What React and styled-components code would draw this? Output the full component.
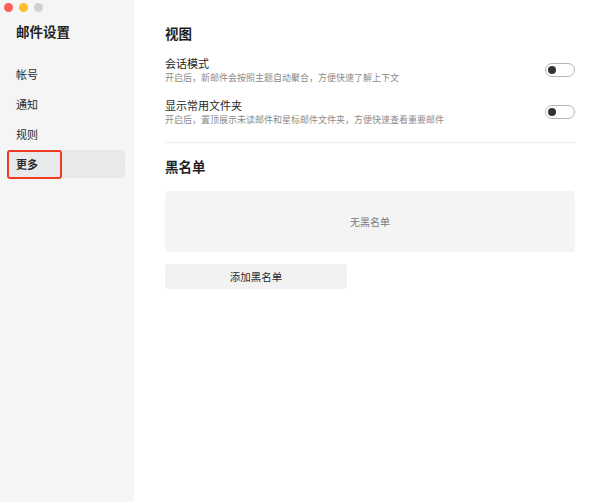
import React from "react";
import styled, { createGlobalStyle } from "styled-components";

const Global = createGlobalStyle`
  html, body { margin: 0; padding: 0; background: #ffffff; }
  body { font-family: "Noto Sans CJK SC", "Noto Sans", sans-serif; }
  * { box-sizing: border-box; }
`;

const Window = styled.div`
  width: 604px;
  height: 502px;
  display: flex;
  background: #ffffff;
  overflow: hidden;
`;

const Sidebar = styled.div`
  width: 134px;
  flex-shrink: 0;
  background: #f5f5f5;
  display: flex;
  flex-direction: column;
  padding: 2px 9px 0 8px;
`;

const Lights = styled.div`
  display: flex;
  gap: 6px;
  margin-left: -4px;
  height: 10px;
  align-items: center;
`;

const Light = styled.span`
  width: 9px;
  height: 9px;
  border-radius: 50%;
  background: ${(p) => p.$c};
`;

const SideTitle = styled.div`
  font-size: 13.5px;
  font-weight: 700;
  color: #1f1f1f;
  padding-left: 8px;
  margin-top: 9px;
  line-height: 20px;
`;

const Nav = styled.div`
  display: flex;
  flex-direction: column;
  gap: 2px;
  margin-top: 19px;
`;

const NavItem = styled.div`
  position: relative;
  height: 28px;
  display: flex;
  align-items: center;
  padding-left: 8px;
  font-size: 11px;
  color: #2a2a2a;
  border-radius: 4px;
  background: ${(p) => (p.$active ? "#e8e9eb" : "transparent")};
  font-weight: ${(p) => (p.$active ? 700 : 400)};
`;

const Highlight = styled.span`
  position: absolute;
  left: -1px;
  top: 0;
  width: 55px;
  height: 29px;
  border: 2px solid #f03b20;
  border-radius: 3px;
`;

const Main = styled.div`
  flex: 1;
  padding: 23px 29px 0 31px;
  display: flex;
  flex-direction: column;
`;

const Heading = styled.div`
  font-size: 13.5px;
  font-weight: 700;
  color: #1f1f1f;
  line-height: 20px;
`;

const Rows = styled.div`
  display: flex;
  flex-direction: column;
  gap: 14px;
  margin-top: 13px;
`;

const Row = styled.div`
  display: flex;
  align-items: center;
  justify-content: space-between;
`;

const RowText = styled.div`
  display: flex;
  flex-direction: column;
`;

const RowTitle = styled.div`
  font-size: 11px;
  color: #1f1f1f;
  line-height: 15px;
`;

const RowDesc = styled.div`
  font-size: 9px;
  color: #8a8a8a;
  line-height: 13px;
`;

const Toggle = styled.div`
  width: 30px;
  height: 14px;
  border: 1px solid #b5b5b5;
  border-radius: 8px;
  display: flex;
  align-items: center;
  padding-left: 2px;
  background: #ffffff;
`;

const Knob = styled.span`
  width: 8px;
  height: 8px;
  border-radius: 50%;
  background: #333333;
`;

const Divider = styled.div`
  height: 1px;
  background: #ececec;
  margin-top: 16px;
`;

const Heading2 = styled(Heading)`
  margin-top: 13px;
`;

const Empty = styled.div`
  margin-top: 15px;
  height: 61px;
  background: #f4f4f4;
  border-radius: 4px;
  display: flex;
  align-items: center;
  justify-content: center;
  font-size: 10px;
  color: #777777;
`;

const AddButton = styled.div`
  margin-top: 12px;
  width: 182px;
  height: 25px;
  background: #f2f2f2;
  border-radius: 2px;
  display: flex;
  align-items: center;
  justify-content: center;
  font-size: 10.5px;
  color: #2a2a2a;
`;

export default function App() {
  return (
    <>
      <Global />
      <Window>
        <Sidebar>
          <Lights>
            <Light $c="#fe5f57" />
            <Light $c="#febc2e" />
            <Light $c="#d0d0d0" />
          </Lights>
          <SideTitle>邮件设置</SideTitle>
          <Nav>
            <NavItem>帐号</NavItem>
            <NavItem>通知</NavItem>
            <NavItem>规则</NavItem>
            <NavItem $active>
              更多
              <Highlight />
            </NavItem>
          </Nav>
        </Sidebar>
        <Main>
          <Heading>视图</Heading>
          <Rows>
            <Row>
              <RowText>
                <RowTitle>会话模式</RowTitle>
                <RowDesc>开启后，新邮件会按照主题自动聚合，方便快速了解上下文</RowDesc>
              </RowText>
              <Toggle><Knob /></Toggle>
            </Row>
            <Row>
              <RowText>
                <RowTitle>显示常用文件夹</RowTitle>
                <RowDesc>开启后，置顶展示未读邮件和星标邮件文件夹，方便快速查看重要邮件</RowDesc>
              </RowText>
              <Toggle><Knob /></Toggle>
            </Row>
          </Rows>
          <Divider />
          <Heading2>黑名单</Heading2>
          <Empty>无黑名单</Empty>
          <AddButton>添加黑名单</AddButton>
        </Main>
      </Window>
    </>
  );
}
